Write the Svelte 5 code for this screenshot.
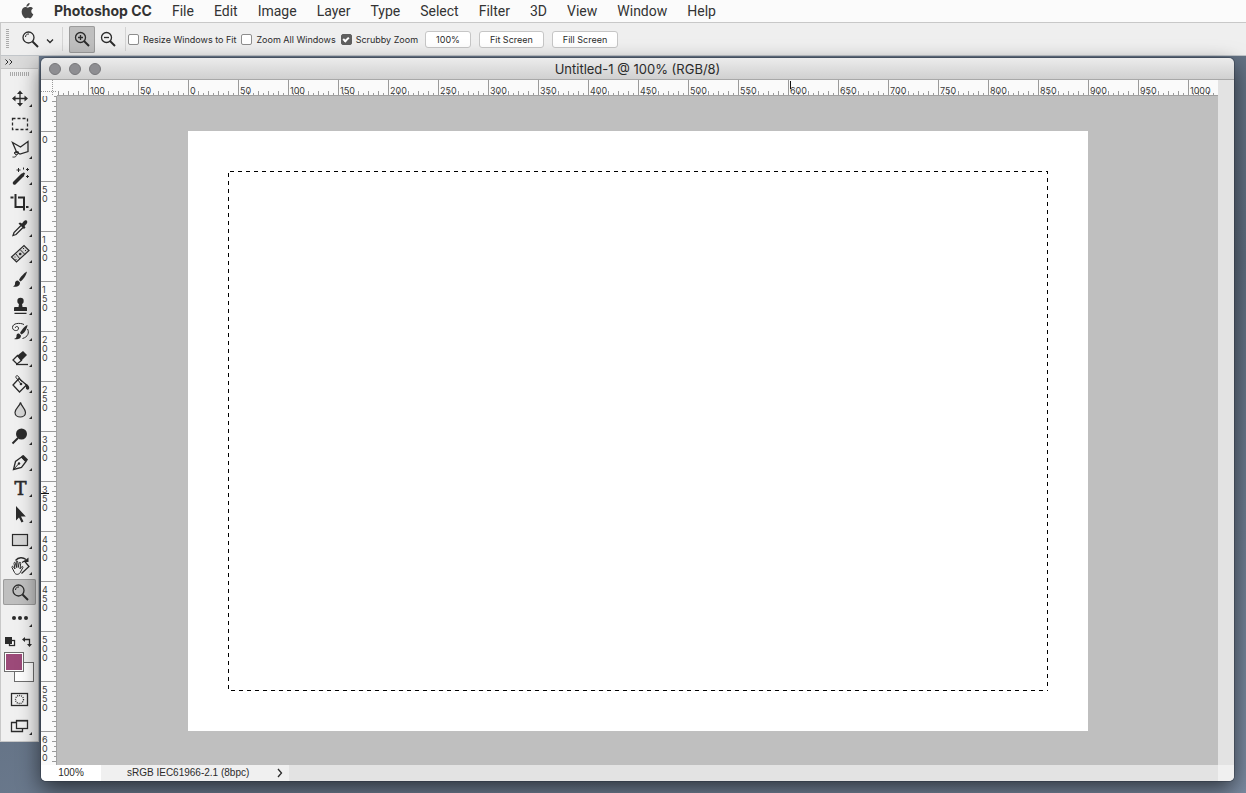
<script lang="ts">
	const menus = ['File', 'Edit', 'Image', 'Layer', 'Type', 'Select', 'Filter', '3D', 'View', 'Window', 'Help'];

	const tools = [
		'Move',
		'Marquee',
		'Lasso',
		'Magic Wand',
		'Crop',
		'Eyedropper',
		'Healing Brush',
		'Brush',
		'Clone Stamp',
		'History Brush',
		'Eraser',
		'Paint Bucket',
		'Blur',
		'Dodge',
		'Pen',
		'Type',
		'Path Selection',
		'Rectangle',
		'Rotate View',
		'Zoom',
		'More'
	];

	let innerWidth = $state(window.innerWidth);
	let innerHeight = $state(window.innerHeight);

	// ruler marks, in document pixels
	const across = $derived(Array.from({ length: Math.floor((innerWidth - 38) / 50) }, (_, i) => (i - 3) * 50));
	const down = $derived(Array.from({ length: Math.floor((innerHeight - 81) / 50) }, (_, i) => (i - 1) * 50));

	let activeTool = $state('Zoom');
	let zoomMode = $state('in');
	let resizeWindows = $state(false);
	let zoomAll = $state(false);
	let scrubby = $state(true);
</script>

<svelte:window bind:innerWidth bind:innerHeight />

<header class="menubar">
	<svg class="apple" viewBox="0 0 14 18" width="14" height="18" aria-hidden="true">
		<path
			d="M9.6 1c.1 1-.3 1.900-.9 2.600-.6.700-1.500 1.200-2.300 1.100-.1-.9.300-1.900.9-2.500C7.900 1.500 8.900 1.100 9.600 1z"
		/>
		<path
			d="M12.900 6.600c-1 .6-1.600 1.500-1.600 2.700 0 1.400.8 2.500 2 3-.3.900-.7 1.700-1.300 2.400-.5.800-1.100 1.500-2 1.500s-1.200-.5-2.300-.5-1.500.5-2.300.5c-.9 0-1.600-.8-2.100-1.600C1.900 12.900 1.100 9.700 2.100 7.500c.6-1.500 1.900-2.400 3.200-2.400 1 0 1.800.6 2.500.6s1.700-.7 2.900-.6c.9 0 1.700.5 2.200 1.500z"
		/>
	</svg>
	<nav>
		<a class="app-name" href="#app">Photoshop CC</a>
		{#each menus as menu}
			<a href="#{menu}">{menu}</a>
		{/each}
	</nav>
</header>

<div class="options">
	<span class="grip"></span>
	<button class="preset" aria-label="Tool presets">
		<svg viewBox="0 0 32 20" width="32" height="20">
			<circle cx="6.500" cy="8.500" r="5.500" class="line" />
			<path d="M3.500 8c0-2 1.500-3.200 3.500-3" class="thin" />
			<path d="M10.500 12.500l5.500 5.500" class="thick" />
			<path d="M25 10.500l3 3 3-3" class="line" />
		</svg>
	</button>
	<span class="divider"></span>
	<button class="mode" class:active={zoomMode === 'in'} aria-label="Zoom In" onclick={() => (zoomMode = 'in')}>
		<svg viewBox="0 0 16 16" width="16" height="16">
			<circle cx="6.500" cy="6.500" r="5" class="line" />
			<path d="M4 6.500h5M6.500 4v5" class="line" />
			<path d="M10 10l5 5" class="thick" />
		</svg>
	</button>
	<button class="mode" class:active={zoomMode === 'out'} aria-label="Zoom Out" onclick={() => (zoomMode = 'out')}>
		<svg viewBox="0 0 16 16" width="16" height="16">
			<circle cx="6.500" cy="6.500" r="5" class="line" />
			<path d="M4 6.500h5" class="line" />
			<path d="M10 10l5 5" class="thick" />
		</svg>
	</button>
	<span class="divider"></span>
	<div class="checks">
		<label><input type="checkbox" bind:checked={resizeWindows} />Resize Windows to Fit</label>
		<label><input type="checkbox" bind:checked={zoomAll} />Zoom All Windows</label>
		<label><input type="checkbox" bind:checked={scrubby} />Scrubby Zoom</label>
	</div>
	<div class="actions">
		<button>100%</button>
		<button>Fit Screen</button>
		<button>Fill Screen</button>
	</div>
</div>

<div class="desktop">
	<aside class="toolbar">
		<button class="collapse" aria-label="Expand panel">
			<svg viewBox="0 0 8 6" width="8" height="6">
				<path d="M.5.500L3 3 .5 5.500M4.500.500L7 3 4.500 5.500" class="thin" />
			</svg>
		</button>
		<span class="grip wide"></span>
		<div class="tools">
			{#each tools as tool}
				<button class="tool" class:active={activeTool === tool} aria-label={tool} onclick={() => (activeTool = tool)}>
					<svg viewBox="0 0 33 26" width="33" height="26">
						{#if tool === 'Move'}
							<path d="M10.500 13.500h13M17 7v13" class="line" />
							<path d="M17 5.500l3 3.500h-6zM17 21.500l3-3.500h-6zM9 13.500l3.500-3v6zM25 13.500l-3.500-3v6z" class="solid" />
						{:else if tool === 'Marquee'}
							<rect x="9.500" y="7.500" width="15" height="11" class="line" stroke-dasharray="3 2" />
						{:else if tool === 'Lasso'}
							<path d="M14 16L9.500 5.500l8 4.500 7.500-5.500v10l-8 2.500-3-1.500" class="line" />
							<ellipse cx="13.500" cy="16" rx="2" ry="1.500" class="thin" />
							<path d="M13 17.500c1 1.500-.5 3-3.500 2.500M16 15l-5 1" class="thin" />
						{:else if tool === 'Magic Wand'}
							<path d="M11.500 20l8-8" class="wand" />
							<path d="M19 12.500l2.500-2.500" class="thick" />
							<path d="M15.500 5v4M13.500 7h4M24.500 5v3M23 6.500h3M24.500 12v3M23 13.500h3" class="thin" />
							<path d="M20.500 4.500v2" class="thin" />
						{:else if tool === 'Crop'}
							<path d="M12.500 5v13h9M15 8.500h6v13M7.500 8.500h3M23 18h2.500" class="thick" />
						{:else if tool === 'Eyedropper'}
							<path d="M18 10.500l-7 7-1 3 3-1 7-7" class="line" />
							<path d="M15.500 8.500l1.500-1 2 1 1.500-2c3-3 5 0 3 2.500l-2 2 1 1.500-1.500 1.500z" class="solid" />
						{:else if tool === 'Healing Brush'}
							<path d="M8.500 16L21 4.500l5 5L13.500 21z" class="pale" />
							<path d="M12.500 12.500l4.500 5.500M17 8.500l5 5" class="thin" />
							<circle cx="17.200" cy="13" r="1.300" class="solid" />
							<path d="M12 15.500v1M13 18v1M20.500 7v1M22.500 9v1" class="thin" />
						{:else if tool === 'Brush'}
							<path d="M24 4.500c-3 1.500-7 6-8 8.500l1.500 1.500C20 13 23.500 8 24 4.500z" class="solid" />
							<path d="M15 13.500c-2.500 0-3 1.500-3 3.500 0 1-1 2-2 2.500 3 .8 7 .3 7-4z" class="solid" />
						{:else if tool === 'Clone Stamp'}
							<circle cx="17.500" cy="8" r="3.200" class="solid" />
							<path d="M16 10.500h3l.5 3.500H23q1 0 1 1v3H11v-3q0-1 1-1h3.500zM11.500 19.800h12v1.200h-12z" class="solid" />
						{:else if tool === 'History Brush'}
							<path d="M24.500 6c-3 1-6 5-7.500 8l1.500 1.500c3-1.500 5.500-5.500 6-9.500z" class="solid" />
							<path d="M16 14.500c-2.500 0-2.500 1.500-2.500 3 0 1-1 2-2.500 2.500 3 .8 7 .2 7-3.500z" class="solid" />
							<path
								d="M21 5.500c-4-2-11.500-1.500-11.500 3 0 4 6.500 4 6 .5-.3-2-3.500-2-3 0M24.500 10c2 3.500.5 8-5 9.500"
								class="thin"
							/>
						{:else if tool === 'Eraser'}
							<path d="M14.500 10.500l5.500-4.500 4 4-6 6z" class="solid" />
							<path d="M14.500 10.500l-4.500 4.500 4 4 4.500-3.500z" class="line" />
							<path d="M13 19.500h12" class="line" />
						{:else if tool === 'Paint Bucket'}
							<path d="M16 7.500l7.500 6.500-7 7L10 14z" class="line" />
							<path d="M18 13l-5-6.500c-1-1.500 1.500-2.500 2.500-1l3 5" class="thin" />
							<circle cx="18" cy="13" r="1.300" class="solid" />
							<path d="M22 12.500c3 .5 5 3.500 4 5.500-1 1.500-3.500.5-3-1.500z" class="solid" />
						{:else if tool === 'Blur'}
							<path d="M17.500 5.500c1 4 5 6 5 10 0 6-10.500 6-10.500 0 0-4 4.500-6 5.500-10z" class="pale" />
						{:else if tool === 'Dodge'}
							<circle cx="18.500" cy="11" r="5.500" class="solid" />
							<path d="M15 15l-5.500 5.500" class="thick" />
						{:else if tool === 'Pen'}
							<path d="M10.500 20.500l2-8 6-4.500 4.500 4.500-4.500 6z" class="line" />
							<path d="M10.500 20.500l5-5.500" class="thin" />
							<circle cx="16" cy="14.500" r="1.200" class="solid" />
							<path d="M19 6.500l1.500-.5 4.500 4.500-1 1.500-1.500 1-4.500-5z" class="solid" />
						{:else if tool === 'Type'}
							<text x="17.500" y="20" text-anchor="middle" class="type-glyph">T</text>
						{:else if tool === 'Path Selection'}
							<path d="M13 5v14.500l3-3 2.500 5 2-1-2.500-5h4.800z" class="solid" />
						{:else if tool === 'Rectangle'}
							<rect x="9.500" y="7.500" width="15" height="11" class="pale" />
						{:else if tool === 'Rotate View'}
							<path d="M19 9.500l2.500-1.500 4.500 5.500-7.500 7" class="line" />
							<path d="M12.500 7.500c3-3.500 7.500-3.500 10.500-1" class="line" />
							<path d="M25.500 4.500v4.500H20z" class="solid" />
							<path
								d="M11.500 19.500l-2.500-5c-.5-1.500 1-1.500 1.500-.5l1.500 2-1-5.500c-.2-1.500 1.200-1.500 1.500 0l1 4-.3-5.500c0-1.500 1.500-1.500 1.600 0l.4 5.500 1-4.500c.3-1.400 1.700-1 1.500.4l-.7 5.500 1.500-2c1-1 2 0 1.200 1l-2.700 5c-1.500 2-4.500 2-5.500-.4z"
								class="hand"
							/>
						{:else if tool === 'Zoom'}
							<circle cx="15.500" cy="11.500" r="5.500" class="line" />
							<path d="M12.500 11c0-2 1.500-3.200 3.500-3" class="thin" />
							<path d="M19.500 15.500l5.500 5.500" class="thick" />
						{:else}
							<circle cx="11" cy="13" r="2" class="solid" />
							<circle cx="17" cy="13" r="2" class="solid" />
							<circle cx="23" cy="13" r="2" class="solid" />
						{/if}
						{#if tool !== 'Zoom'}
							<path d="M29 19v3h-3z" class="solid" />
						{/if}
					</svg>
				</button>
			{/each}
		</div>
		<div class="color-row">
			<button aria-label="Default colors">
				<svg viewBox="0 0 11 11" width="11" height="11">
					<rect x="4.500" y="4.500" width="5" height="5" fill="#fff" class="line" />
					<rect x="0" y="1" width="7" height="7" class="solid" />
				</svg>
			</button>
			<button aria-label="Switch colors">
				<svg viewBox="0 0 11 11" width="11" height="11">
					<path d="M2 3.500h5.500v5" class="line" />
					<path d="M0 3.500L3 1v5zM7.500 11L5 8h5z" class="solid" />
				</svg>
			</button>
		</div>
		<div class="swatches">
			<button class="swatch background" aria-label="Background color"></button>
			<button class="swatch foreground" aria-label="Foreground color"></button>
		</div>
		<div class="modes">
			<button class="tool" aria-label="Quick Mask">
				<svg viewBox="0 0 33 26" width="33" height="26">
					<rect x="8.500" y="7.500" width="16" height="12" class="line" />
					<circle cx="16.500" cy="13.500" r="4" class="line" stroke-dasharray="1 1" />
				</svg>
			</button>
			<button class="tool" aria-label="Screen Mode">
				<svg viewBox="0 0 33 26" width="33" height="26">
					<path d="M14 10.500H8.500v9h11V17" class="line" />
					<rect x="13.500" y="8.500" width="11" height="8" class="line" />
					<path d="M13 8h12v1.500H13zM29 20v3h-3z" class="solid" />
				</svg>
			</button>
		</div>
	</aside>

	<main class="window">
		<div class="titlebar">
			<div class="lights">
				<button aria-label="Close"></button>
				<button aria-label="Minimize"></button>
				<button aria-label="Zoom window"></button>
			</div>
			<h1>Untitled-1 @ 100% (RGB/8)</h1>
		</div>

		<div class="document">
			<div class="corner"></div>
			<div class="ruler across">
				<svg width="100%" height="16">
					{#each across as mark}
						<svg x={mark + 131} width="50" height="16">
							<path d="M.5 0v16" class="tick" />
							<path
								d="M5.500 13v3M10.500 11v5M15.500 13v3M20.500 11v5M25.500 13v3M30.500 11v5M35.500 13v3M40.500 11v5M45.500 13v3"
								class="tick"
							/>
							{#if mark > -150}
								<text x="2" y="14">{Math.abs(mark)}</text>
							{/if}
						</svg>
					{/each}
					<path d="M733.500 1v8" class="cursor" />
				</svg>
			</div>
			<div class="ruler down">
				<svg width="16" height="100%">
					{#each down as mark}
						<svg y={mark + 35} width="16" height="50">
							<path d="M0 .5h16" class="tick" />
							<path
								d="M13 5.500h3M11 10.500h5M13 15.500h3M11 20.500h5M13 25.500h3M11 30.500h5M13 35.500h3M11 40.500h5M13 45.500h3"
								class="tick"
							/>
							{#each String(Math.abs(mark)) as digit, i}
								{#if mark >= 0 || i > 0}
									<text x="1" y={12 + i * 9}>{digit}</text>
								{/if}
							{/each}
						</svg>
					{/each}
					<path d="M0 397.500h8" class="cursor" />
				</svg>
			</div>
			<div class="pasteboard">
				<svg class="artboard" viewBox="0 0 900 600" width="900" height="600" aria-label="Canvas with a selection">
					<rect width="900" height="600" fill="#fff" />
					<g class="ants">
						<path d="M40 40.500h820" stroke-dashoffset="-2" />
						<path d="M40 559.500h820" stroke-dashoffset="-3" />
						<path d="M40.500 40v520" stroke-dashoffset="-2" />
						<path d="M859.500 40v520" stroke-dashoffset="-7" />
					</g>
				</svg>
			</div>
			<div class="scroll-y"></div>
			<footer class="status">
				<span class="zoom">100%</span>
				<span class="profile">sRGB IEC61966-2.1 (8bpc)</span>
				<button aria-label="Status options">
					<svg viewBox="0 0 6 10" width="6" height="10"><path d="M1 1l3.500 4L1 9" class="line" /></svg>
				</button>
			</footer>
			<div class="scroll-corner"></div>
		</div>
	</main>
</div>

<style>
	:global(body) {
		background: #66758a;
	}
	:global(#app) {
		display: flex;
		flex-direction: column;
		height: 100vh;
		overflow: hidden;
		font-family: Inter, 'Liberation Sans', sans-serif;
		color: #2b2b2b;
	}
	button {
		appearance: none;
		border: 0;
		padding: 0;
		margin: 0;
		background: none;
		font: inherit;
		color: inherit;
		box-sizing: border-box;
	}
	svg {
		display: block;
		flex: none;
	}
	.line,
	.thin,
	.thick,
	.wand {
		fill: none;
		stroke: #2b2b2b;
		stroke-width: 1.3;
	}
	rect.line[fill] {
		fill: #fff;
	}
	.thin {
		stroke-width: 1;
	}
	.thick {
		stroke-width: 2;
	}
	.wand {
		stroke-width: 3.5;
		stroke-linecap: round;
	}
	.solid {
		fill: #2b2b2b;
	}
	.pale {
		fill: #d6d6d6;
		stroke: #2b2b2b;
		stroke-width: 1.2;
	}
	.hand {
		fill: #f0f0f0;
		stroke: #2b2b2b;
		stroke-width: 1;
	}
	.type-glyph {
		font: 18px 'DejaVu Serif', serif;
		fill: #2b2b2b;
		stroke: #2b2b2b;
		stroke-width: 0.6;
	}

	.menubar {
		display: flex;
		align-items: center;
		flex: none;
		height: 22px;
		padding-left: 20px;
		background: #fbfbfb;
		border-bottom: 1px solid #c8c8c8;
	}
	.apple {
		fill: #454545;
	}
	nav {
		display: flex;
		gap: 20px;
		padding-left: 20px;
		font: 14px/22px Roboto, sans-serif;
	}
	nav a {
		color: #333;
		text-decoration: none;
	}
	nav .app-name {
		font-family: Inter, sans-serif;
		font-weight: bold;
	}

	.options {
		display: flex;
		align-items: center;
		flex: none;
		height: 33px;
		padding-left: 5px;
		background: #efefef;
		border-bottom: 1px solid #c2c6ca;
		border-left: 1px solid #c8c8c8;
		font-size: 9px;
		box-sizing: border-box;
	}
	.grip {
		width: 3px;
		height: 20px;
		background: repeating-linear-gradient(#aaa 0 1px, transparent 1px 2px);
	}
	.preset {
		margin: 0 8px 0 13px;
	}
	.divider {
		width: 1px;
		height: 24px;
		background: #d4d4d4;
	}
	.mode {
		display: grid;
		place-items: center;
		width: 26px;
		height: 27px;
		border-radius: 2px;
	}
	.divider + .mode {
		margin-left: 6px;
	}
	.mode + .divider {
		margin-left: 4px;
	}
	.mode.active,
	.tool.active {
		background: #bfbfbf;
		box-shadow: inset 0 0 0 1px #9c9c9c;
	}
	.checks {
		display: flex;
		gap: 5px;
		padding-left: 2px;
	}
	label {
		display: flex;
		align-items: center;
		gap: 4px;
		white-space: nowrap;
	}
	input {
		appearance: none;
		width: 11px;
		height: 11px;
		margin: 0;
		border: 1px solid #8d8d8d;
		border-radius: 2px;
		background: #fff;
		box-sizing: border-box;
	}
	input:checked {
		display: grid;
		place-items: center;
		background: #5f5f5f;
		border-color: #5f5f5f;
	}
	input:checked::after {
		content: '';
		width: 6px;
		height: 4px;
		border: solid #fff;
		border-width: 0 0 2px 2px;
		box-sizing: border-box;
		transform: rotate(-45deg);
	}
	.actions {
		display: flex;
		gap: 8px;
		padding-left: 7px;
	}
	.actions button {
		height: 17px;
		padding: 0 10px;
		border: 1px solid #c6c6c6;
		border-radius: 3px;
		background: #fff;
	}

	.desktop {
		display: flex;
		flex: 1;
		align-items: flex-start;
		min-height: 0;
		padding-right: 12px;
		background: linear-gradient(165deg, #6b7a8d, #5e6c7e 50%, #7a8aa0);
	}
	.toolbar {
		display: flex;
		flex-direction: column;
		flex: none;
		width: 39px;
		box-sizing: border-box;
		background: #f0f0f0;
		border: 1px solid #c8c8c8;
		border-top: 0;
	}
	.collapse {
		height: 13px;
		padding-left: 4px;
		background: #dadada;
		border-bottom: 1px solid #c4c4c4;
	}
	.grip.wide {
		width: 20px;
		height: 4px;
		margin: 3px 0 9px 9px;
		background: repeating-linear-gradient(90deg, #aaa 0 1px, transparent 1px 2px);
	}
	.tools,
	.modes {
		display: flex;
		flex-direction: column;
		padding-left: 2px;
	}
	.tool {
		width: 33px;
		height: 26px;
		border-radius: 2px;
	}
	.color-row {
		display: flex;
		justify-content: space-between;
		padding: 5px 5px 5px 4px;
	}
	.swatches {
		display: grid;
		grid-template-columns: 10px 10px 10px;
		grid-template-rows: 10px 10px 10px;
		padding-left: 3px;
	}
	.swatch {
		border: 1px solid #6e6e6e;
		background: #fff;
	}
	.background {
		grid-area: 2 / 2 / 4 / 4;
	}
	.foreground {
		grid-area: 1 / 1 / 3 / 3;
		background: #9c4a79;
		box-shadow: inset 0 0 0 1px #fff;
	}
	.modes {
		padding-top: 4px;
		padding-bottom: 3px;
	}

	.window {
		display: flex;
		flex-direction: column;
		flex: 1;
		align-self: stretch;
		min-width: 0;
		margin: 2px 0 12px 2px;
		border-radius: 5px;
		overflow: hidden;
		box-shadow:
			0 0 0 1px rgba(40, 48, 60, 0.4),
			0 8px 22px rgba(0, 0, 0, 0.6);
	}
	.titlebar {
		display: grid;
		grid-template-columns: 1fr auto 1fr;
		align-items: center;
		height: 22px;
		flex: none;
		padding: 1px 8px 0;
		background: linear-gradient(#ececec, #d0d0d0);
		border-bottom: 1px solid #a8a8a8;
		box-sizing: border-box;
	}
	.lights {
		display: flex;
		gap: 8px;
	}
	.lights button {
		width: 12px;
		height: 12px;
		border: 1px solid #77777a;
		border-radius: 50%;
		background: #8e8e92;
	}
	h1 {
		margin: 0;
		font-size: 13px;
		font-weight: normal;
		line-height: 20px;
	}
	.document {
		display: grid;
		grid-template-columns: 16px 1fr 16px;
		grid-template-rows: 16px 1fr 16px;
		flex: 1;
		min-height: 0;
		background: #e3e3e3;
	}
	.corner {
		background:
			repeating-linear-gradient(90deg, #999 0 1px, transparent 1px 2px) 0 11px / 100% 1px no-repeat,
			repeating-linear-gradient(#999 0 1px, transparent 1px 2px) 11px 0 / 1px 100% no-repeat,
			#fafafa;
	}
	.ruler {
		min-width: 0;
		min-height: 0;
		overflow: hidden;
		background: #fafafa;
		font-size: 9px;
		box-sizing: border-box;
	}
	.ruler.across {
		border-bottom: 1px solid #a0a0a0;
	}
	.ruler.down {
		grid-area: 2 / 1;
		border-right: 1px solid #a0a0a0;
	}
	.ruler text {
		fill: #3a3a3a;
	}
	.tick {
		stroke: #9a9a9a;
		fill: none;
	}
	.cursor {
		stroke: #111;
	}
	.pasteboard {
		display: grid;
		place-content: center;
		grid-area: 2 / 2;
		min-width: 0;
		min-height: 0;
		padding: 1px 0 0 1px;
		overflow: hidden;
		background: #bfbfbf;
	}
	.ants {
		fill: none;
		stroke: #000;
		stroke-dasharray: 4 4;
		shape-rendering: crispEdges;
	}
	.scroll-y {
		grid-area: 2 / 3;
	}
	.status {
		display: flex;
		grid-area: 3 / 1 / 4 / 3;
		align-items: stretch;
		font: 10px/16px 'Liberation Sans', sans-serif;
	}
	.status span,
	.status button {
		background: #f0f0f0;
	}
	.status .zoom {
		width: 60px;
		box-sizing: border-box;
		background: #fff;
		text-align: center;
	}
	.profile {
		padding: 0 28px 0 26px;
	}
	.status button {
		padding-right: 6px;
	}
	.scroll-corner {
		grid-area: 3 / 3;
		background: #f0f0f0;
	}
</style>
